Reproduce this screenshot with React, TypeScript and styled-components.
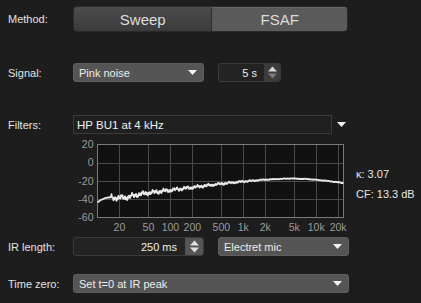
import React from "react";
import styled, { createGlobalStyle, css } from "styled-components";

const Global = createGlobalStyle`
  html, body { margin: 0; padding: 0; background: #1d1d1d; }
  body { font-family: "Liberation Sans", Arial, sans-serif; color: #e6e6e6; }
`;

const Page = styled.div`
  display: flex;
  flex-direction: column;
  padding: 6px 0 0 8px;
  width: 421px;
  height: 303px;
  box-sizing: border-box;
  overflow: hidden;
`;

const Row = styled.div<{ $top: number; $h: number }>`
  display: flex;
  align-items: center;
  margin-top: ${(p) => p.$top}px;
  height: ${(p) => p.$h}px;
`;

const Label = styled.div`
  width: 65px;
  flex: none;
  font-size: 11px;
  color: #e2e2e2;
`;

const Segmented = styled.div`
  display: flex;
  width: 275px;
  height: 26px;
  border-radius: 4px;
  overflow: hidden;
  border: 1px solid #2a2a2a;
  box-sizing: border-box;
`;

const Segment = styled.div<{ $active?: boolean; $w: number }>`
  width: ${(p) => p.$w}px;
  display: flex;
  align-items: center;
  justify-content: center;
  font-size: 15px;
  color: #dcdcdc;
  ${(p) =>
    p.$active
      ? css`
          background: #5a5a5a;
          border-left: 1px solid #2e2e2e;
          border-top: 1px solid #666;
        `
      : css`
          background: linear-gradient(#4c4c4c, #3b3b3b);
        `}
`;

const Dropdown = styled.div<{ $w: number; $ml?: number }>`
  width: ${(p) => p.$w}px;
  margin-left: ${(p) => p.$ml ?? 0}px;
  height: 19px;
  box-sizing: border-box;
  border-radius: 3px;
  background: #555555;
  border: 1px solid #5f5f5f;
  display: flex;
  align-items: center;
  justify-content: space-between;
  padding: 0 6px 0 5px;
  font-size: 11px;
  color: #ececec;
`;

const Spinner = styled.div<{ $w: number; $ml: number }>`
  width: ${(p) => p.$w}px;
  margin-left: ${(p) => p.$ml}px;
  height: 19px;
  box-sizing: border-box;
  border-radius: 3px;
  background: #232323;
  border: 1px solid #3a3a3a;
  display: flex;
  overflow: hidden;
`;

const SpinValue = styled.div<{ $pr: number }>`
  flex: 1;
  display: flex;
  align-items: center;
  justify-content: flex-end;
  padding-right: ${(p) => p.$pr}px;
  font-size: 11px;
  color: #ececec;
`;

const SpinArrows = styled.div<{ $w: number; $bg: string }>`
  width: ${(p) => p.$w}px;
  background: ${(p) => p.$bg};
  display: flex;
  align-items: center;
  justify-content: center;
`;

const FilterBox = styled.div`
  width: 259px;
  height: 19px;
  box-sizing: border-box;
  background: #202020;
  border: 1px solid #3a3a3a;
  display: flex;
  align-items: center;
  padding-left: 3px;
  font-size: 11.5px;
  color: #f0f0f0;
`;

const FilterArrow = styled.div`
  margin-left: 5px;
  display: flex;
  align-items: center;
`;

const ChartRow = styled.div`
  display: flex;
  margin-top: 4px;
  height: 95px;
`;

const Spacer = styled.div`
  width: 65px;
  flex: none;
`;

const Stats = styled.div`
  display: flex;
  flex-direction: column;
  gap: 8px;
  padding-top: 30px;
  font-size: 11px;
  color: #e6e6e6;
`;

const Tri = ({ c = "#f2f2f2" }: { c?: string }) => (
  <svg width="9" height="5" viewBox="0 0 9 5">
    <path d="M0 0 H9 L4.5 5 Z" fill={c} />
  </svg>
);

const UpDown = ({ c = "#e0e0e0" }: { c?: string }) => (
  <svg width="9" height="13" viewBox="0 0 9 13">
    <path d="M0 5.5 L4.5 0.5 L9 5.5 Z" fill={c} />
    <path d="M0 7.5 L4.5 12.5 L9 7.5 Z" fill={c} />
  </svg>
);

const UpDownDim = () => (
  <svg width="9" height="13" viewBox="0 0 9 13">
    <path d="M0 5.5 L4.5 0.5 L9 5.5 Z" fill="#d8d8d8" />
    <path d="M0 7.5 L4.5 12.5 L9 7.5 Z" fill="#7a7a7a" />
  </svg>
);

const L = 24.5;
const R = 270.5;
const T = 6.5;
const B = 79.5;
const PX_DEC = 72.9;
const fx = (f: number) => L + Math.log10(f / 10) * PX_DEC;
const dy = (db: number) => T + ((20 - db) / 80) * (B - T);

const anchors: [number, number][] = [
  [10, -43.5],
  [11, -41],
  [12.5, -39],
  [14, -38],
  [18, -38.5],
  [25, -38],
  [35, -35],
  [50, -33],
  [100, -30],
  [200, -27],
  [500, -23],
  [1000, -20.5],
  [2000, -18.5],
  [4500, -17.2],
  [8000, -18],
  [14000, -19.8],
  [24000, -22.3],
];

const baseDb = (f: number) => {
  const lf = Math.log10(f);
  for (let i = 0; i < anchors.length - 1; i++) {
    const [f0, d0] = anchors[i];
    const [f1, d1] = anchors[i + 1];
    if (f <= f1) {
      const t = (lf - Math.log10(f0)) / (Math.log10(f1) - Math.log10(f0));
      return d0 + (d1 - d0) * t;
    }
  }
  return anchors[anchors.length - 1][1];
};

const curve = (() => {
  const pts: string[] = [];
  for (let i = 0; i <= 492; i++) {
    const px = i / 2;
    const f = 10 * Math.pow(10, px / PX_DEC);
    let amp = 0;
    if (f > 15) amp = Math.max(0.25, 2.2 - Math.log10(f / 15) * 0.85);
    const n =
      amp *
      (Math.sin(i * 2.3) * 0.7 +
        Math.sin(i * 0.91 + 1.3) * 0.55 +
        Math.sin(i * 0.29 + 0.4) * 0.6);
    const db = baseDb(f) + n;
    pts.push(`${(L + px).toFixed(1)},${dy(db).toFixed(1)}`);
  }
  return pts.join(" ");
})();

const xTicks: [number, string][] = [
  [20, "20"],
  [50, "50"],
  [100, "100"],
  [200, "200"],
  [500, "500"],
  [1000, "1k"],
  [2000, "2k"],
  [5000, "5k"],
  [10000, "10k"],
  [20000, "20k"],
];

const yTicks = [20, 0, -20, -40, -60];

const Chart = () => (
  <svg width="283" height="95" viewBox="0 0 283 95">
    <rect x={L} y={T} width={R - L} height={B - T} fill="#111111" />
    {xTicks.map(([f]) => {
      const x = Math.round(fx(f)) + 0.5;
      return <line key={f} x1={x} x2={x} y1={T} y2={B} stroke="#4a4a4a" strokeWidth={1} />;
    })}
    {[0, -20, -40].map((d) => {
      const y = Math.round(dy(d)) + 0.5;
      return <line key={d} x1={L} x2={R} y1={y} y2={y} stroke="#4a4a4a" strokeWidth={1} />;
    })}
    <rect x={L} y={T} width={R - L} height={B - T} fill="none" stroke="#7a7a7a" strokeWidth={1} />
    <polyline points={curve} fill="none" stroke="#e8e8e8" strokeWidth={1.8} strokeLinejoin="round" />
    {yTicks.map((d) => (
      <text
        key={d}
        x={20.5}
        y={dy(d) + 3.5}
        textAnchor="end"
        fontSize="10.5"
        fill="#9c9c9c"
        fontFamily="Liberation Sans, Arial, sans-serif"
      >
        {d}
      </text>
    ))}
    {xTicks.map(([f, t]) => (
      <text
        key={t}
        x={fx(f)}
        y={92.5}
        textAnchor="middle"
        fontSize="10.5"
        fill="#9c9c9c"
        fontFamily="Liberation Sans, Arial, sans-serif"
      >
        {t}
      </text>
    ))}
  </svg>
);

export default function App() {
  return (
    <>
      <Global />
      <Page>
        <Row $top={0} $h={26}>
          <Label>Method:</Label>
          <Segmented>
            <Segment $w={139}>Sweep</Segment>
            <Segment $w={136} $active>
              FSAF
            </Segment>
          </Segmented>
        </Row>
        <Row $top={31} $h={19}>
          <Label>Signal:</Label>
          <Dropdown $w={131}>
            <span>Pink noise</span>
            <Tri />
          </Dropdown>
          <Spinner $w={63} $ml={14}>
            <SpinValue $pr={7}>5 s</SpinValue>
            <SpinArrows $w={16} $bg="#3c3c3c">
              <UpDownDim />
            </SpinArrows>
          </Spinner>
        </Row>
        <Row $top={33} $h={19}>
          <Label>Filters:</Label>
          <FilterBox>HP BU1 at 4 kHz</FilterBox>
          <FilterArrow>
            <Tri />
          </FilterArrow>
        </Row>
        <ChartRow>
          <Spacer />
          <Chart />
          <Stats>
            <span>κ: 3.07</span>
            <span>CF: 13.3 dB</span>
          </Stats>
        </ChartRow>
        <Row $top={4} $h={19}>
          <Label>IR length:</Label>
          <Spinner $w={131} $ml={0}>
            <SpinValue $pr={8}>250 ms</SpinValue>
            <SpinArrows $w={18} $bg="#555555">
              <UpDown />
            </SpinArrows>
          </Spinner>
          <Dropdown $w={131} $ml={14}>
            <span>Electret mic</span>
            <Tri />
          </Dropdown>
        </Row>
        <Row $top={18} $h={19}>
          <Label>Time zero:</Label>
          <Dropdown $w={276}>
            <span>Set t=0 at IR peak</span>
            <Tri />
          </Dropdown>
        </Row>
      </Page>
    </>
  );
}
